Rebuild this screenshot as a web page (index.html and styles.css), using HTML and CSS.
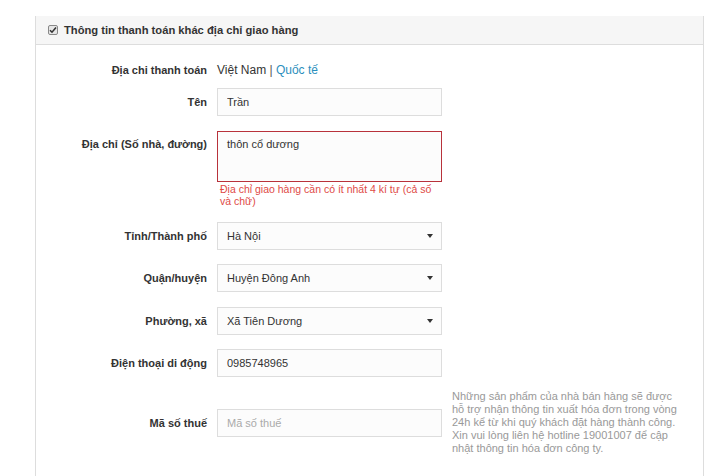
FILE: index.html
```html
<!DOCTYPE html>
<html lang="vi">
  <head>
    <meta charset="UTF-8" />
    <title>Thông tin thanh toán</title>
    <link rel="stylesheet" href="styles.css">
  </head>
  <body>
    <div class="panel">
      <div class="panel-head">
        <span class="check">
          <svg width="8" height="8" viewBox="0 0 8 8"><path d="M1 4.2 L3 6.2 L7 1.6" fill="none" stroke="#333" stroke-width="1.6"/></svg>
        </span>
        <span class="head-text">Thông tin thanh toán khác địa chỉ giao hàng</span>
      </div>

      <div class="form">
        <div class="row row-country">
          <div class="label">Địa chi thanh toán</div>
          <div class="field country">Việt Nam <span class="sep">|</span> <a href="#" class="link">Quốc tế</a></div>
        </div>

        <div class="row row-name">
          <div class="label">Tên</div>
          <div class="field"><input class="input" type="text" value="Trần"></div>
        </div>

        <div class="row row-top">
          <div class="label label-top">Địa chỉ (Số nhà, đường)</div>
          <div class="field">
            <div class="textarea-box">
              <textarea class="textarea">thôn cổ dương</textarea>
            </div>
            <div class="error-text">Địa chỉ giao hàng cần có ít nhất 4 kí tự (cả số và chữ)</div>
          </div>
        </div>

        <div class="row">
          <div class="label">Tỉnh/Thành phố</div>
          <div class="field select-wrap">
            <select class="input select"><option>Hà Nội</option></select>
          </div>
        </div>

        <div class="row">
          <div class="label">Quận/huyện</div>
          <div class="field select-wrap">
            <select class="input select"><option>Huyện Đông Anh</option></select>
          </div>
        </div>

        <div class="row">
          <div class="label">Phường, xã</div>
          <div class="field select-wrap">
            <select class="input select"><option>Xã Tiên Dương</option></select>
          </div>
        </div>

        <div class="row">
          <div class="label">Điện thoại di động</div>
          <div class="field"><input class="input" type="text" value="0985748965"></div>
        </div>

        <div class="row row-tax">
          <div class="label">Mã số thuế</div>
          <div class="field"><input class="input" type="text" placeholder="Mã số thuế"></div>
          <div class="help">Những sản phẩm của nhà bán hàng sẽ được hỗ trợ nhận thông tin xuất hóa đơn trong vòng 24h kể từ khi quý khách đặt hàng thành công. Xin vui lòng liên hệ hotline 19001007 để cập nhật thông tin hóa đơn công ty.</div>
        </div>
      </div>
    </div>
  </body>
</html>
```

FILE: styles.css
```css
/* Base */
body { margin: 0; background: #fff; font-family: "Liberation Sans", Arial, sans-serif; font-size: 12px; color: #333; }

/* Panel */
.panel { margin: 16px 0 0 35px; width: 667px; height: 460px; border-left: 1px solid #ddd; border-right: 1px solid #ddd; }
.panel-head { height: 28px; background: #f6f6f6; border-bottom: 1px solid #ddd; display: flex; align-items: center; padding-left: 12px; }
.check { width: 8px; height: 8px; border: 1px solid #888; border-radius: 2px; background: #e6e6e6; display: flex; align-items: center; justify-content: center; margin-right: 6px; }
.check svg { display: block; }
.head-text { font-weight: bold; font-size: 11.2px; color: #333; }

/* Form rows */
.form { padding-top: 15px; }
.row { display: flex; align-items: center; gap: 10px; margin-bottom: 14.33px; }
.row-top { align-items: flex-start; margin-bottom: 15px; }
.row-country { height: 20px; margin-bottom: 8px; }
.row-name { margin-bottom: 15px; }
.label { width: 171px; text-align: right; font-weight: bold; font-size: 11px; flex-shrink: 0; }
.label-top { padding-top: 7px; }
.field { width: 225px; flex-shrink: 0; position: relative; }
.country { font-size: 12px; }
.sep { color: #555; }
.link { color: #2b8fbd; text-decoration: none; }

/* Inputs */
.input { box-sizing: border-box; width: 225px; height: 28px; border: 1px solid #ddd; background: #fcfcfc; font-family: inherit; font-size: 11px; color: #333; padding: 0 9px; margin: 0; outline: none; display: block; }
.input::placeholder { color: #aaa; }
.textarea-box { height: 49px; border: 1px solid #b8323b; background: #fcfcfc; }
.textarea { box-sizing: border-box; width: 100%; height: 100%; border: 0; background: transparent; padding: 6px 9px; margin: 0; resize: none; outline: none; display: block; font-family: inherit; font-size: 11px; color: #333; }
.error-text { color: #e04a46; font-size: 10.5px; line-height: 12px; padding: 1px 0 0 3px; }

/* Select */
.select { appearance: none; -webkit-appearance: none; border-radius: 0; }
.select-wrap::after { content: ""; position: absolute; right: 9px; top: 12px; border-left: 3px solid transparent; border-right: 3px solid transparent; border-top: 4px solid #333; }

/* Tax row */
.row-tax { margin-top: -1px; }
.help { width: 230px; color: #999; font-size: 11px; line-height: 13px; }
```
